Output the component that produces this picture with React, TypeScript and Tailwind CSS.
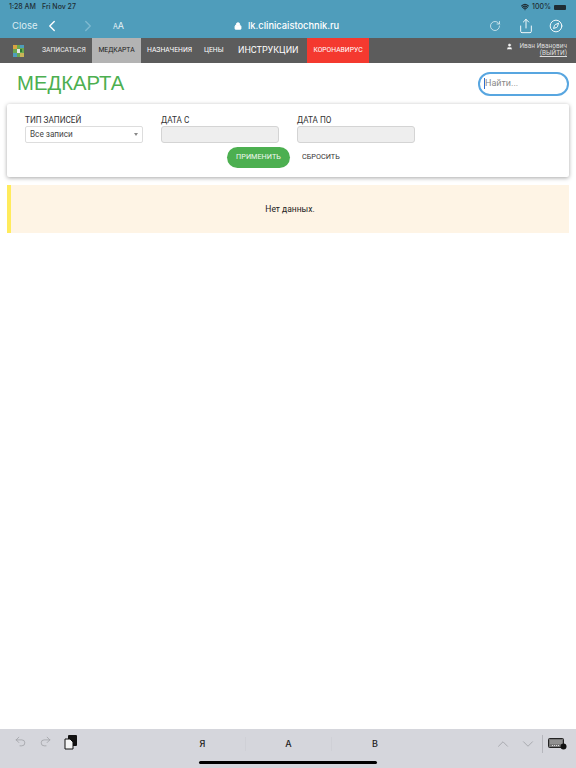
import React from "react";
import { ChevronLeft, ChevronRight, RotateCw, Compass, Share, Undo2, Redo2, ChevronUp, ChevronDown, Lock, User, Wifi } from "lucide-react";

function Logo() {
  return (
    <svg width="11" height="12" viewBox="0 0 11 12">
      <rect width="11" height="12" fill="#6aa84f" />
      <rect x="0" y="0" width="4" height="4" fill="#d9a441" />
      <rect x="7" y="0" width="4" height="3" fill="#4f9dbb" />
      <rect x="4" y="4" width="3" height="4" fill="#e8e8e8" />
      <rect x="0" y="8" width="4" height="4" fill="#4f9dbb" />
      <rect x="7" y="8" width="4" height="4" fill="#c9b458" />
      <rect x="7" y="4" width="2" height="3" fill="#2e7d32" />
    </svg>
  );
}

function KeyboardIcon() {
  return (
    <svg width="19" height="12" viewBox="0 0 19 12">
      <rect x="0.5" y="0.5" width="15" height="9" rx="1" fill="#777" stroke="#222" />
      <path d="M2.5 3h11M2.5 5h11M4 7.5h8" stroke="#ddd" strokeWidth="1" strokeDasharray="1 1" />
      <circle cx="15.5" cy="8.5" r="3" fill="#111" />
    </svg>
  );
}

export default function App() {
  return (
    <div className="relative flex h-[768px] w-[576px] flex-col overflow-hidden bg-white font-['Roboto',sans-serif]">
      <header className="h-[38px] shrink-0 bg-[#4f9dbb] text-white">
        <div className="flex h-[14px] items-center justify-between pl-[9px] pr-[10px] font-['Inter',sans-serif] text-[7px] font-medium text-[#1f2d33]">
          <div className="flex gap-[6px]">
            <span>1:28 AM</span>
            <span>Fri Nov 27</span>
          </div>
          <div className="flex items-center gap-[3px]">
            <Wifi size={8} strokeWidth={3.5} />
            <span>100%</span>
            <span className="h-[5px] w-[12px] rounded-[1px] bg-[#1f2d33]" />
          </div>
        </div>
        <div className="flex h-[24px] items-center font-['Inter',sans-serif]">
          <span className="ml-[12px] w-[31px] text-[9.5px] text-[#dcedf3]">Close</span>
          <ChevronLeft size={18} strokeWidth={1.8} />
          <ChevronRight size={18} strokeWidth={1.8} className="ml-[18px] text-[#7fbad0]" />
          <span className="ml-[16px] w-[20px] text-[9px] text-[#e6f2f6]"><span className="text-[7px]">A</span>A</span>
          <div className="ml-[101px] flex items-center gap-[6px] text-[9.3px] font-medium">
            <Lock size={8} fill="white" strokeWidth={2.5} />
            <span>lk.clinicaistochnik.ru</span>
          </div>
          <RotateCw size={12} strokeWidth={1.6} className="ml-[150px] text-[#dcedf3]" />
          <Share size={16} strokeWidth={1.4} className="ml-[17px]" />
          <Compass size={14} strokeWidth={1.6} className="ml-[15px]" />
        </div>
      </header>

      <nav className="flex h-[25px] shrink-0 items-stretch bg-[#5c5c5c] text-[6.8px] text-white">
        <div className="flex w-[42px] items-center pl-[13px]"><Logo /></div>
        <span className="flex w-[50px] items-center text-[#eeeeee]">ЗАПИСАТЬСЯ</span>
        <span className="flex w-[49px] items-center justify-center bg-[#b3b3b3] text-[#1c1c1c]">МЕДКАРТА</span>
        <span className="ml-[6px] flex w-[57px] items-center">НАЗНАЧЕНИЯ</span>
        <span className="flex w-[34px] items-center">ЦЕНЫ</span>
        <span className="flex w-[69px] items-center text-[9px]">ИНСТРУКЦИИ</span>
        <span className="flex w-[62px] items-center justify-center bg-[#f4392f]">КОРОНАВИРУС</span>
        <div className="ml-auto flex items-start gap-[6px] pr-[9px] pt-[5px] text-[6.5px] leading-[7px] text-[#dddddd]">
          <User size={7} fill="white" />
          <div className="text-right">
            <div>Иван Иванович</div>
            <div className="underline">(ВЫЙТИ)</div>
          </div>
        </div>
      </nav>

      <main className="flex-1 px-[7px]">
        <div className="flex h-[41px] items-center justify-between pl-[10px]">
          <h1 className="font-['Liberation_Sans',sans-serif] text-[20.3px] leading-none text-[#4caf50]">МЕДКАРТА</h1>
          <div className="flex h-[24px] w-[91px] items-center rounded-[12px] border-2 border-[#58a6e0] pl-[4px] text-[9px] text-[#8a8a8a]">
            <span className="h-[11px] w-px bg-[#2f6fd0]" />
            Найти...
          </div>
        </div>

        <section className="h-[73px] w-[562px] rounded-[2px] bg-white px-[18px] pt-[10px] shadow-[0_1px_4px_rgba(0,0,0,0.35)]">
          <div className="flex gap-[18px] text-[8.2px] text-[#333333]">
            <div className="w-[118px]">
              <div className="h-[12px] leading-[13px]">ТИП ЗАПИСЕЙ</div>
              <div className="flex h-[17px] items-center justify-between rounded-[2px] border border-[#dddddd] px-[4px] text-[#444444]">
                <span>Все записи</span>
                <span className="h-0 w-0 border-x-[2.5px] border-t-[3px] border-x-transparent border-t-[#888888]" />
              </div>
            </div>
            <div className="w-[118px]">
              <div className="h-[12px] leading-[13px]">ДАТА С</div>
              <div className="h-[17px] rounded-[3px] border border-[#d4d4d4] bg-[#eeeeee]" />
            </div>
            <div className="w-[118px]">
              <div className="h-[12px] leading-[13px]">ДАТА ПО</div>
              <div className="h-[17px] rounded-[3px] border border-[#d4d4d4] bg-[#eeeeee]" />
            </div>
          </div>
          <div className="mt-[4px] flex items-center pl-[202px] text-[7.3px]">
            <span className="flex h-[21px] w-[63px] items-center justify-center rounded-full bg-[#4caf50] text-[#f0f8f0]">ПРИМЕНИТЬ</span>
            <span className="ml-[12px] text-[#333333]">СБРОСИТЬ</span>
          </div>
        </section>

        <div className="mt-[8px] flex h-[48px] w-[562px] items-center justify-center border-l-[4px] border-[#ffeb5c] bg-[#fef4e5] pt-px text-[8.5px] text-[#222222]">
          Нет данных.
        </div>
      </main>

      <footer className="flex h-[39px] shrink-0 items-start bg-[#d5d6dc] pt-[6px] font-['Inter',sans-serif]">
        <Undo2 size={13} strokeWidth={1.3} className="ml-[14px] text-[#9a9ba0]" />
        <Redo2 size={13} strokeWidth={1.3} className="ml-[12px] text-[#9a9ba0]" />
        <svg width="13" height="15" viewBox="0 0 13 15" className="ml-[12px]">
          <rect x="4" y="0" width="9" height="11" rx="1" fill="#111" />
          <path d="M1 4h5l3 3v7H1z" fill="#f5f5f5" stroke="#111" />
        </svg>
        <div className="ml-[83px] flex h-[18px] items-center text-[9px] font-medium text-[#222222]">
          <span className="w-[86px] border-r border-[#cfd0d6] text-center">Я</span>
          <span className="w-[86px] border-r border-[#cfd0d6] text-center">А</span>
          <span className="w-[86px] text-center">В</span>
        </div>
        <ChevronUp size={18} strokeWidth={1} className="ml-[76px] text-[#9a9ba0]" />
        <ChevronDown size={18} strokeWidth={1} className="ml-[7px] text-[#9a9ba0]" />
        <div className="ml-[5px] flex h-[18px] items-center border-l border-[#b5b6bc] pl-[5px]"><KeyboardIcon /></div>
      </footer>
      <div className="absolute bottom-[4px] left-[199px] h-[3px] w-[178px] rounded-full bg-black" />
    </div>
  );
}
